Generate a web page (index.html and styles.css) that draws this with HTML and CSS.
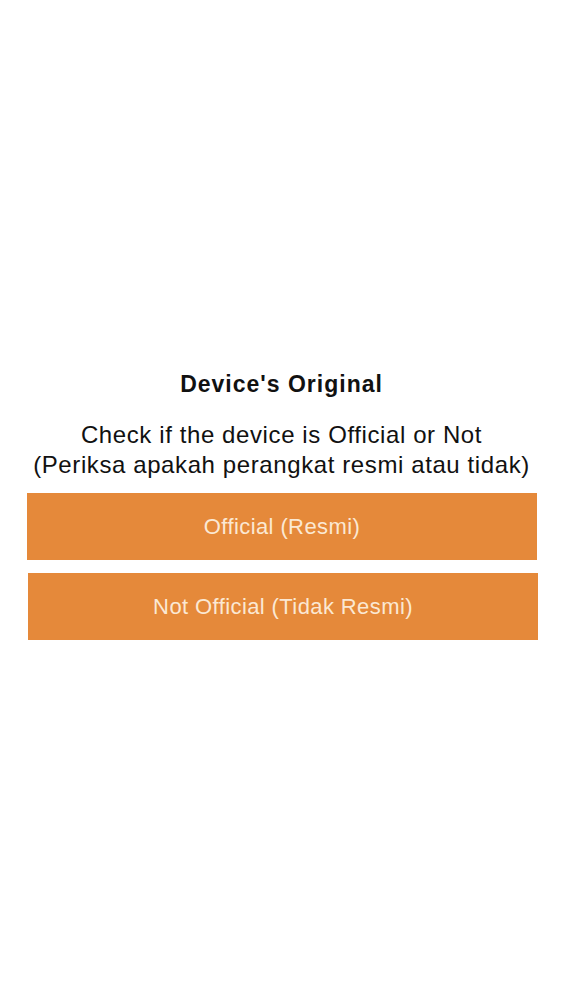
FILE: index.html
```html
<!DOCTYPE html>
<html>
<head>
<meta charset="utf-8">
<link rel="stylesheet" href="styles.css">
</head>
<body>
<main class="screen">
  <h1 class="title">Device's Original</h1>
  <p class="desc">Check if the device is Official or Not<br>(Periksa apakah perangkat resmi atau tidak)</p>
  <div class="buttons">
    <button class="btn">Official (Resmi)</button>
    <button class="btn btn-second">Not Official (Tidak Resmi)</button>
  </div>
</main>
</body>
</html>
```
FILE: styles.css
```css
html, body {
  margin: 0;
  padding: 0;
  background: #ffffff;
}
.screen {
  width: 563px;
  height: 1000px;
  box-sizing: border-box;
  padding-top: 370px;
  font-family: "Liberation Sans", Arial, sans-serif;
  color: #111111;
  display: flex;
  flex-direction: column;
  align-items: center;
}
.title {
  margin: 0;
  font-size: 23px;
  font-weight: bold;
  line-height: 28px;
  letter-spacing: 1px;
}
.desc {
  margin: 22px 0 0;
  font-size: 24px;
  line-height: 30px;
  text-align: center;
  letter-spacing: 0.6px;
}
.buttons {
  margin-top: 13px;
  display: flex;
  flex-direction: column;
  gap: 13px;
  width: 100%;
  padding: 0 26px 0 27px;
  box-sizing: border-box;
}
.btn {
  height: 67px;
  border: none;
  margin: 0;
  background: #e5893a;
  color: #fbe8d3;
  font-family: "Liberation Sans", Arial, sans-serif;
  font-size: 22px;
  letter-spacing: 0.4px;
  width: 100%;
}
.btn-second {
  margin-left: 1px;
}
```
